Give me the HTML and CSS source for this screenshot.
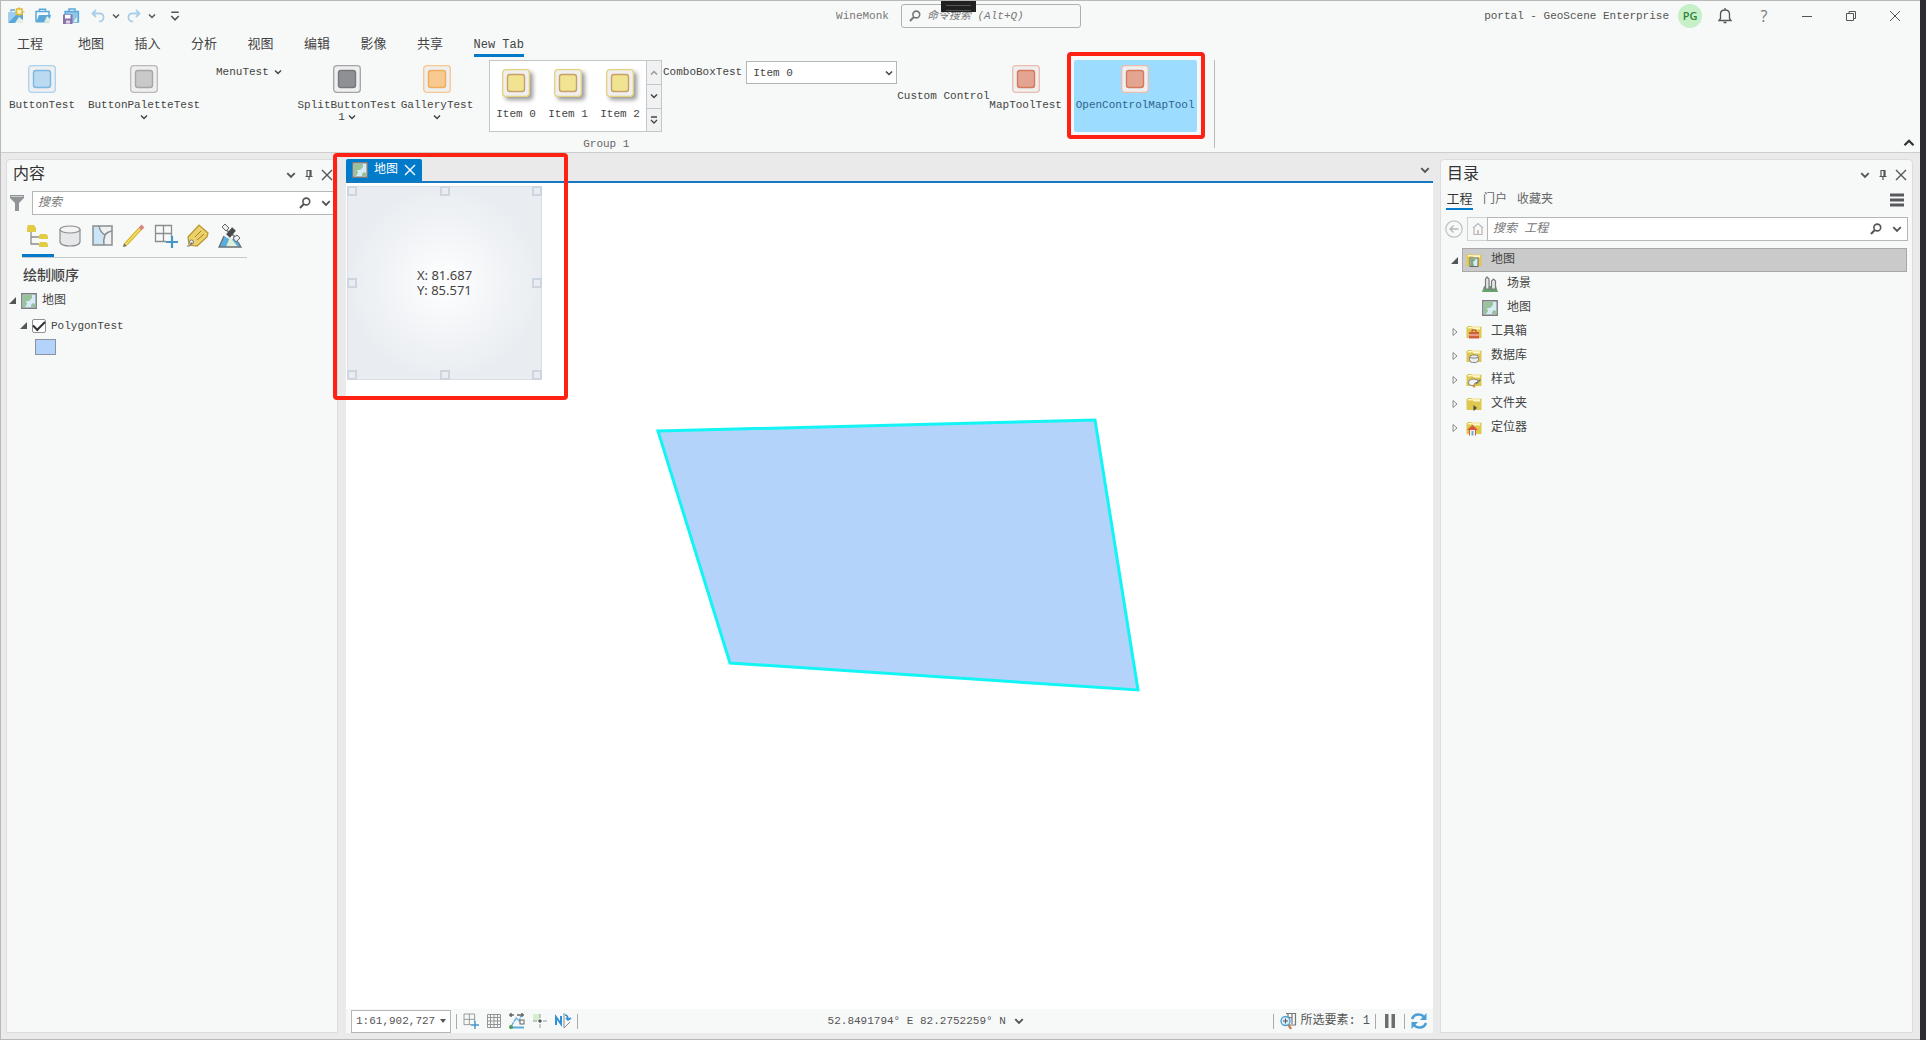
FILE: index.html
```html
<!DOCTYPE html>
<html lang="zh-CN">
<head>
<meta charset="utf-8">
<meta name="viewport" content="width=device-width, initial-scale=1">
<title>WineMonk</title>
<link rel="stylesheet" href="styles.css">
</head>
<body>
<svg class="defs" aria-hidden="true">
  <symbol id="chev" viewBox="0 0 8 8"><path d="M1 2.5 4 5.5 7 2.5" fill="none" stroke="currentColor" stroke-width="1.5"/></symbol>
  <symbol id="chev-up" viewBox="0 0 8 8"><path d="M1 5.5 4 2.5 7 5.5" fill="none" stroke="currentColor" stroke-width="1.5"/></symbol>
  <symbol id="chev-bar" viewBox="0 0 8 8"><path d="M1 1H7M1 4 4 7 7 4" fill="none" stroke="currentColor" stroke-width="1.3"/></symbol>
  <symbol id="close" viewBox="0 0 12 12"><path d="M1 1 11 11M11 1 1 11" fill="none" stroke="currentColor" stroke-width="1.4"/></symbol>
  <symbol id="pin" viewBox="0 0 12 12"><path d="M3.5 1.5H8.5M4 1.5V7M8 1.5V7M7 1.5V7M2.5 7.5H9.5M6 7.5V11" fill="none" stroke="currentColor" stroke-width="1.2"/></symbol>
  <symbol id="search" viewBox="0 0 12 12"><circle cx="7.3" cy="4.5" r="3.4" fill="none" stroke="currentColor" stroke-width="1.6"/><path d="M4.8 7 1 11" stroke="currentColor" stroke-width="2"/></symbol>
  <symbol id="box" viewBox="0 0 28 28"><rect x=".7" y=".7" width="26.6" height="26.6" rx="3" fill="#efeff0" stroke="var(--rim)" stroke-width="1.3"/><rect x="5.5" y="5.5" width="17" height="17" rx="2.5" fill="var(--fill)" stroke="var(--edge)" stroke-width="1.4"/></symbol>
  <symbol id="map" viewBox="0 0 16 16"><path d="M.8.8H15.2V15.2H.8Z" fill="#d6ebf8" stroke="#7b7b7b" stroke-width="1.4"/><path d="M2 2H11V5L8 8 5 8 6 11 4 14H2ZM10 14V12L12 10 14 11V14Z" fill="#97c29a"/></symbol>
  <symbol id="folder" viewBox="0 0 16 16"><path d="M.5 3.5 2 2H5L6.5 2.8H15.5V14H.5Z" fill="#dfc84e"/><path d="M2 4.5 6.5 4.3 8 5.5H14V3.3H6.3L5 3H2Z" fill="#fff6c9"/></symbol>
  <symbol id="grid-plus" viewBox="0 0 24 24"><path d="M1.5 1.5H17.5V17.5H1.5ZM9.5 1.5V17.5M1.5 9.5H17.5" fill="none" stroke="#8a8d8f" stroke-width="1.3"/><path d="M12 13H24V24H12Z" fill="#f7f8f8"/><path d="M18 12V24M12 18H24" stroke="#4596cb" stroke-width="2.2"/></symbol>
</svg>

<div class="window">
  <header class="titlebar">
    <div class="quick">
      <button class="ib q1" aria-label="新建工程"><svg width="18" height="18" viewBox="0 0 18 18"><path d="M1.500 5H16V16H1.500Z" fill="#5aa7da"/><path d="M2 5V15L9 8V5Z" fill="#9dcdf0"/><path d="M8 16 12 10 16 13V16Z" fill="#e3f0e4"/><path d="M4 4.500V3H8" fill="none" stroke="#5aa7da" stroke-width="1.300"/><rect x="9.500" y="2" width="5.500" height="5.500" fill="#fff3b5" stroke="#dfb93d" stroke-width="1.500"/><path d="M12.200 0V2M12.200 7.500V9.500M8 4.700H9M16 4.700H17.500" stroke="#dfb93d"/></svg></button>
      <button class="ib q2" aria-label="打开工程"><svg width="18" height="18" viewBox="0 0 18 18"><path d="M2 15V4.500H15V8M5.500 4V2.200H11.500V4" fill="none" stroke="#5aa7da" stroke-width="1.500"/><path d="M2 15.500 5 8H17L15 15.500Z" fill="#5aa7da"/><path d="M10 15.500 13 9 16 12V15.500Z" fill="#dfeee0"/></svg></button>
      <button class="ib q3" aria-label="保存工程"><svg width="18" height="18" viewBox="0 0 18 18"><path d="M3 12V4.500H16.500V15H10" fill="#8ec4e8" stroke="#5aa7da" stroke-width="1.300"/><path d="M7 4V2H13V4" fill="none" stroke="#5aa7da" stroke-width="1.500"/><path d="M1 7.500H10.500V17H1Z" fill="#8a72ab"/><path d="M3 8H8.500V11.500H3Z" fill="#fff"/><path d="M4 13.500H8V16.500H4Z" fill="#ded6e8"/><path d="M11 15 15 10V15Z" fill="#dfeee0"/></svg></button>
      <button class="ib q4 faded" aria-label="撤消"><svg width="14" height="14" viewBox="0 0 14 14"><path d="M5 1 1.500 4.500 5 8M1.500 4.500H9Q13 5 12.500 9 12 12.500 8 12.500" fill="none" stroke="currentColor" stroke-width="1.800"/></svg></button>
      <button class="ib q5" aria-label="撤消列表"><svg width="8" height="8"><use href="#chev"/></svg></button>
      <button class="ib q6 faded" aria-label="恢复"><svg width="14" height="14" viewBox="0 0 14 14"><path d="M9 1 12.500 4.500 9 8M12.500 4.500H5Q1 5 1.500 9 2 12.500 6 12.500" fill="none" stroke="currentColor" stroke-width="1.800"/></svg></button>
      <button class="ib q5" aria-label="恢复列表"><svg width="8" height="8"><use href="#chev"/></svg></button>
      <button class="ib q7" aria-label="自定义快速访问工具栏"><svg width="10" height="10"><use href="#chev-bar"/></svg></button>
    </div>
    <div class="command">
      <span class="app-name">WineMonk</span>
      <label class="command-box"><svg width="12" height="12"><use href="#search"/></svg><input type="text" aria-label="命令搜索" placeholder="命令搜索 (Alt+Q)"></label>
    </div>
    <div class="account">
      <span>portal - GeoScene Enterprise</span>
      <span class="avatar">PG</span>
      <button class="ib a1" aria-label="通知"><svg width="16" height="18" viewBox="0 0 16 18"><path d="M2 13.500H14L12.500 11.500V7Q12.500 3 8 3 3.500 3 3.500 7V11.500L2 13.500ZM8 3V1M6.500 15.500H9.500" fill="none" stroke="currentColor" stroke-width="1.300"/></svg></button>
      <button class="ib a2 help" aria-label="帮助">?</button>
      <button class="ib a3" aria-label="最小化"><svg width="12" height="12" viewBox="0 0 12 12"><path d="M1 6.500H11" stroke="currentColor"/></svg></button>
      <button class="ib a4" aria-label="还原"><svg width="12" height="12" viewBox="0 0 12 12"><path d="M1.500 3.500H8.500V10.500H1.500ZM4 3V1.500H10.500V8.500H9" fill="none" stroke="currentColor"/></svg></button>
      <button class="ib a5" aria-label="关闭"><svg width="12" height="12" viewBox="0 0 12 12"><path d="M1 1 11 11M11 1 1 11" stroke="currentColor"/></svg></button>
    </div>
    <div class="grip"></div>
  </header>

  <nav class="tabs">
    <button>工程</button>
    <div class="tab-set">
      <button>地图</button><button>插入</button><button>分析</button><button>视图</button><button>编辑</button><button>影像</button><button>共享</button><button class="on">New Tab</button>
    </div>
  </nav>

  <section class="ribbon">
    <div class="group">
      <div class="tools">
        <button class="tool t-button"><svg class="blue" width="28" height="28"><use href="#box"/></svg><span>ButtonTest</span></button>
        <button class="tool t-palette"><svg class="grey" width="28" height="28"><use href="#box"/></svg><span>ButtonPaletteTest</span><svg width="8" height="8"><use href="#chev"/></svg></button>
        <button class="menu">MenuTest<svg width="8" height="8"><use href="#chev"/></svg></button>
        <button class="tool t-split"><svg class="dark" width="28" height="28"><use href="#box"/></svg><span>SplitButtonTest</span><span>1<svg width="8" height="8"><use href="#chev"/></svg></span></button>
        <button class="tool t-gallery"><svg class="orange" width="28" height="28"><use href="#box"/></svg><span>GalleryTest</span><svg width="8" height="8"><use href="#chev"/></svg></button>
        <div class="gallery">
          <button class="item"><svg class="yellow" width="28" height="28"><use href="#box"/></svg>Item 0</button>
          <button class="item"><svg class="yellow" width="28" height="28"><use href="#box"/></svg>Item 1</button>
          <button class="item"><svg class="yellow" width="28" height="28"><use href="#box"/></svg>Item 2</button>
          <div class="spin">
            <button aria-label="向上"><svg class="dim" width="8" height="8"><use href="#chev-up"/></svg></button>
            <button aria-label="向下"><svg width="8" height="8"><use href="#chev"/></svg></button>
            <button aria-label="更多"><svg width="8" height="8"><use href="#chev-bar"/></svg></button>
          </div>
        </div>
        <label class="combo-label" for="combo">ComboBoxTest</label>
        <span class="pick combo"><select id="combo"><option>Item 0</option></select><svg width="8" height="8"><use href="#chev"/></svg></span>
        <span class="custom">Custom Control</span>
        <button class="tool t-map"><svg class="red" width="28" height="28"><use href="#box"/></svg><span>MapToolTest</span></button>
        <button class="tool t-open"><svg class="red" width="28" height="28"><use href="#box"/></svg><span>OpenControlMapTool</span><i class="mark"></i></button>
      </div>
      <div class="group-name">Group 1</div>
    </div>
    <button class="ib fold" aria-label="折叠功能区"><svg width="12" height="12"><use href="#chev-up"/></svg></button>
  </section>

  <main class="dock">
    <aside class="panel contents">
      <div class="head"><h2>内容</h2><button class="ib" aria-label="选项"><svg width="10" height="10"><use href="#chev"/></svg></button><button class="ib" aria-label="固定"><svg width="12" height="12"><use href="#pin"/></svg></button><button class="ib" aria-label="关闭"><svg width="12" height="12"><use href="#close"/></svg></button></div>
      <div class="find-row">
        <svg width="14" height="18" viewBox="0 0 14 18"><path d="M0 1H14V4L9 9V17H5V9L0 4Z" fill="#929597"/><path d="M1 2.500H13" stroke="#c9cbcc"/></svg>
        <div class="find"><input type="text" aria-label="搜索" placeholder="搜索"><svg width="12" height="12"><use href="#search"/></svg><svg width="10" height="10"><use href="#chev"/></svg></div>
      </div>
      <div class="views">
        <button class="on" aria-label="按绘制顺序列出"><svg width="24" height="24" viewBox="0 0 24 24"><path d="M5 8V20H13M5 13H13" fill="none" stroke="#8a8d8f" stroke-width="1.300"/><path d="M2 1H8L10 4V8H1V4ZM14 10H20L22 12V15H13V12ZM14 18H20L22 20V23H13V20Z" fill="#e3cb43"/></svg></button>
        <button aria-label="按数据源列出"><svg width="24" height="24" viewBox="0 0 24 24"><path d="M2 5V18Q3 22 12 22T22 18V5" fill="#e6e7e8" stroke="#8a8d8f" stroke-width="1.200"/><ellipse cx="12" cy="5.500" rx="10" ry="3.500" fill="#f4f4f4" stroke="#8a8d8f" stroke-width="1.200"/></svg></button>
        <button aria-label="按选择列出"><svg width="24" height="24" viewBox="0 0 24 24"><path d="M3 2H22V21H3Z" fill="#eef0f1"/><path d="M3 2H9Q10 8 15 11 13 16 14 21H3Z" fill="#cbe5f7"/><path d="M3 2H22V21H3ZM9 2Q10 8 15 11 13 16 14 21M15 11Q17 8 22 7" fill="none" stroke="#8a8d8f" stroke-width="1.500"/></svg></button>
        <button aria-label="按编辑列出"><svg width="24" height="24" viewBox="0 0 24 24"><path d="M4 20 18 5" stroke="#cfae2a" stroke-width="4"/><path d="M4 20 18 5" stroke="#f0da58" stroke-width="2"/><path d="M18 5 21 2" stroke="#d98782" stroke-width="4"/><path d="M1 23 2 19 5 22Z" fill="#7b6b46"/></svg></button>
        <button aria-label="按捕捉列出"><svg width="24" height="24"><use href="#grid-plus"/></svg></button>
        <button aria-label="按标注列出"><svg width="24" height="24" viewBox="0 0 24 24"><path d="M2 13 13 1 22 9 21 13 11 22 3 21Z" fill="#ecd06b" stroke="#b8962f" stroke-width="1.200"/><path d="M9 13 15 7M11 16 18 10" stroke="#a08121"/><circle cx="5.500" cy="18" r="2" fill="#fff" stroke="#777"/><path d="M1 22Q5 23 6 18" fill="none" stroke="#777"/></svg></button>
        <button aria-label="按影像列出"><svg width="24" height="24" viewBox="0 0 24 24"><path d="M1 23 6 12 13 16 18 13 23 23Z" fill="#5badde"/><path d="M8 23 12 13 20 23Z" fill="#e0f0d8"/><path d="M6 12 1 23H23L20 18" fill="none" stroke="#687077" stroke-width="1.300"/><path d="M7 5 20 15" stroke="#8b8d8f" stroke-width="2"/><path d="M10 12 16 5" stroke="#48494a" stroke-width="5"/><path d="M4 3 7 0 11 4 8 7ZM15 14 19 11 22 14 18 18Z" fill="#eceded" stroke="#666"/></svg></button>
      </div>
      <h3>绘制顺序</h3>
      <ul class="layers">
        <li><svg width="7" height="7" viewBox="0 0 7 7"><path d="M7 0V7H0Z" fill="#555"/></svg><svg width="16" height="16"><use href="#map"/></svg><span>地图</span></li>
        <li class="sub"><svg width="7" height="7" viewBox="0 0 7 7"><path d="M7 0V7H0Z" fill="#555"/></svg><input id="layer" type="checkbox" checked><label for="layer">PolygonTest</label></li>
      </ul>
      <div class="swatch"></div>
    </aside>

    <section class="view">
      <i class="mark"></i>
      <div class="view-tabs">
        <div class="view-tab"><svg width="16" height="16"><use href="#map"/></svg><span>地图</span><button class="ib" aria-label="关闭视图"><svg width="12" height="12"><use href="#close"/></svg></button></div>
        <button class="ib" aria-label="视图列表"><svg width="10" height="10"><use href="#chev"/></svg></button>
      </div>
      <div class="canvas">
        <svg class="shape"><polygon points="312,248 749,237 792,507 384,480" fill="#b3d3fb" stroke="#13f4f4" stroke-width="3"/></svg>
        <div class="overlay">
          <i></i><i></i><i></i>
          <i></i><p>X: 81.687<br>Y: 85.571</p><i></i>
          <i></i><i></i><i></i>
        </div>
      </div>
      <footer class="status">
        <div class="status-part">
          <span class="pick scale"><select aria-label="比例"><option>1:61,902,727</option></select><svg width="6" height="6" viewBox="0 0 6 6"><path d="M0 1H6L3 5Z" fill="#555"/></svg></span>
          <span class="rule"></span>
          <button class="ib" aria-label="捕捉"><svg width="16" height="16"><use href="#grid-plus"/></svg></button>
          <button class="ib" aria-label="格网"><svg width="16" height="16" viewBox="0 0 16 16"><path d="M1.500 1.500H14.500V14.500H1.500ZM4.500 1V15M8 1V15M11.500 1V15M1 4.500H15M1 8H15M1 11.500H15" fill="none" stroke="#929597"/></svg></button>
          <button class="ib" aria-label="约束"><svg width="18" height="18" viewBox="0 0 18 18"><path d="M1 3H6M3 1V5M9 3H16M14 1V5" stroke="#666" stroke-width="1.500"/><path d="M4 13 8 6 11 9 13 4" fill="none" stroke="#5badde" stroke-width="1.500" stroke-dasharray="3 1"/><path d="M2 15.500H16" stroke="#5badde" stroke-width="2"/><rect x="12" y="8" width="4" height="4" fill="none" stroke="#666"/><circle cx="3" cy="15" r="2" fill="#519b56"/></svg></button>
          <button class="ib" aria-label="推断"><svg width="16" height="16" viewBox="0 0 16 16"><path d="M1 1H8V8H1Z" fill="#d5edd0"/><path d="M8 1V15M1 8H15" stroke="#999" stroke-dasharray="4 1"/><circle cx="8" cy="8" r="1.500" fill="#555"/></svg></button>
          <button class="ib" aria-label="校正"><svg width="18" height="18" viewBox="0 0 18 18"><path d="M2 13V5L7 12V4" fill="none" stroke="#2f91d2" stroke-width="2"/><path d="M10 1V16L16 10" fill="none" stroke="#888"/><path d="M11 3Q14 3 14 8M12 6 14 8 17 6" fill="none" stroke="#2f91d2" stroke-width="1.700"/></svg></button>
          <span class="rule"></span>
        </div>
        <button class="coords">52.8491794° E 82.2752259° N<svg width="10" height="10"><use href="#chev"/></svg></button>
        <div class="status-part end">
          <span class="rule"></span>
          <button class="picked"><svg width="18" height="18" viewBox="0 0 18 18"><path d="M7 1.500H16.500V13H10M9 1.500V5L13 6V2M13 6V12" fill="none" stroke="#777" stroke-width="1.200"/><circle cx="6.500" cy="9" r="4.500" fill="#d8edfa" stroke="#4d9ed0" stroke-width="1.300"/><path d="M6.500 6.500V11.500M4 9H9" stroke="#555"/><path d="M9.500 13 12 17" stroke="#c97b3c" stroke-width="2.300"/></svg>所选要素: 1</button>
          <span class="rule"></span>
          <button class="ib" aria-label="暂停"><svg width="14" height="16" viewBox="0 0 14 16"><path d="M2 1H5.500V15H2ZM8.500 1H12V15H8.500Z" fill="#6d6d6d"/></svg></button>
          <span class="rule"></span>
          <button class="ib" aria-label="刷新"><svg width="18" height="18" viewBox="0 0 18 18"><path d="M2 7Q4 2 9 2.500 12 2.500 14 5M16 11Q14 16 9 15.500 6 15.500 4 13" fill="none" stroke="#4b9fd5" stroke-width="2.600"/><path d="M16.500 1V8H10ZM1.500 17V10H8Z" fill="#4b9fd5"/></svg></button>
        </div>
      </footer>
    </section>

    <aside class="panel catalog">
      <div class="head"><h2>目录</h2><button class="ib" aria-label="选项"><svg width="10" height="10"><use href="#chev"/></svg></button><button class="ib" aria-label="固定"><svg width="12" height="12"><use href="#pin"/></svg></button><button class="ib" aria-label="关闭"><svg width="12" height="12"><use href="#close"/></svg></button></div>
      <div class="cat-tabs"><button class="on">工程</button><button>门户</button><button>收藏夹</button><button class="ib burger" aria-label="菜单"><svg width="16" height="14" viewBox="0 0 16 14"><path d="M1 2H15M1 7H15M1 12H15" stroke="#58595b" stroke-width="3"/></svg></button></div>
      <div class="find-row">
        <button class="ib" aria-label="后退"><svg width="18" height="18" viewBox="0 0 18 18"><circle cx="9" cy="9" r="8.200" fill="none" stroke="#bfc1c2" stroke-width="1.200"/><path d="M13.500 9H5M8.500 5.500 5 9 8.500 12.500" fill="none" stroke="#b5b7b8" stroke-width="1.300"/></svg></button>
        <button class="ib home" aria-label="主页"><svg width="12" height="14" viewBox="0 0 12 14"><path d="M1 6 6 1.500 11 6M2 5.500V12.500H10V5.500" fill="none" stroke="#b5b7b8" stroke-width="1.200"/><path d="M5 8H7V12H5Z" fill="#d8bfae"/></svg></button>
        <div class="find"><input type="text" aria-label="搜索 工程" placeholder="搜索 工程"><svg width="12" height="12"><use href="#search"/></svg><svg width="10" height="10"><use href="#chev"/></svg></div>
      </div>
      <ul class="tree">
        <li class="sel"><svg width="8" height="7" viewBox="0 0 8 7"><path d="M7 0V7H0Z" fill="#555"/></svg><span class="node"><svg width="16" height="16" viewBox="0 0 16 16"><use href="#folder"/><rect x="4" y="6" width="8" height="8.500" fill="#d6ebf8" stroke="#686868"/><path d="M5 7H10L7 10 8 14H5Z" fill="#78ad7c"/></svg>地图</span></li>
        <li class="leaf"><svg width="16" height="16" viewBox="0 0 16 16"><path d="M2 10H14L16 16H0Z" fill="#67a26b"/><path d="M3.500 13V3L5 1 7 3V13ZM9.500 13V5L11.500 3 13.500 5V13Z" fill="#e5e6e8" stroke="#77797b" stroke-width="1.200"/></svg>场景</li>
        <li class="leaf"><svg width="16" height="16"><use href="#map"/></svg>地图</li>
        <li><svg width="8" height="10" viewBox="0 0 8 10"><path d="M2 1.500 6 5 2 8.500Z" fill="none" stroke="#8a8a8a"/></svg><span class="node"><svg width="16" height="16" viewBox="0 0 16 16"><use href="#folder"/><path d="M3 8H13V14.500H3Z" fill="#d05f42"/><path d="M6 8V6H10V8" fill="none" stroke="#a9452c"/><path d="M3 11H13" stroke="#fbd9cc"/></svg>工具箱</span></li>
        <li><svg width="8" height="10" viewBox="0 0 8 10"><path d="M2 1.500 6 5 2 8.500Z" fill="none" stroke="#8a8a8a"/></svg><span class="node"><svg width="16" height="16" viewBox="0 0 16 16"><use href="#folder"/><rect x="3.500" y="7" width="9" height="7.500" rx="3" fill="#ececec" stroke="#858585"/><path d="M4 9.500Q8 11 12 9.500" fill="none" stroke="#858585"/></svg>数据库</span></li>
        <li><svg width="8" height="10" viewBox="0 0 8 10"><path d="M2 1.500 6 5 2 8.500Z" fill="none" stroke="#8a8a8a"/></svg><span class="node"><svg width="16" height="16" viewBox="0 0 16 16"><use href="#folder"/><path d="M2.500 11Q2.500 7 8 7 12 7 12.500 10L9 11 8 13.500Q3 14 2.500 11Z" fill="#f3f3f3" stroke="#858585"/><path d="M10 12 14.500 7.500" stroke="#777" stroke-width="1.500"/><circle cx="8" cy="14" r="1.500" fill="#d9923f"/></svg>样式</span></li>
        <li><svg width="8" height="10" viewBox="0 0 8 10"><path d="M2 1.500 6 5 2 8.500Z" fill="none" stroke="#8a8a8a"/></svg><span class="node"><svg width="16" height="16" viewBox="0 0 16 16"><use href="#folder"/><path d="M7.500 9V15L11 12Z" fill="#4b4b4b"/></svg>文件夹</span></li>
        <li><svg width="8" height="10" viewBox="0 0 8 10"><path d="M2 1.500 6 5 2 8.500Z" fill="none" stroke="#8a8a8a"/></svg><span class="node"><svg width="16" height="16" viewBox="0 0 16 16"><use href="#folder"/><path d="M3 9H10V15.500H3Z" fill="#f4f4f4"/><path d="M1 10 6.500 5 12 10Z" fill="#d7573c"/><path d="M3.500 10V15.500M9.500 10V15.500" stroke="#d7573c"/><path d="M5.500 11H7.500V15.500H5.500Z" fill="#66aedb"/></svg>定位器</span></li>
      </ul>
    </aside>
  </main>
</div>
</body>
</html>
```
FILE: styles.css
```css
* { box-sizing: border-box; }

body {
  margin: 0;
  min-height: 100vh;
  display: flex;
  padding-right: 6px;
  background: #2b2d31;
  color: #444;
  font: 11px/16px "Liberation Mono", "Noto Sans CJK SC", monospace;
}

button, input, select {
  margin: 0;
  padding: 0;
  border: 0;
  background: none;
  color: inherit;
  font: inherit;
  border-radius: 0;
}

svg { display: block; flex: none; }
h2, h3, p, ul { margin: 0; padding: 0; font-weight: 400; }
ul { list-style: none; }
.defs { position: absolute; width: 0; height: 0; }

.ib {
  display: flex;
  align-items: center;
  justify-content: center;
  flex: none;
}

.window {
  flex: 1;
  min-width: 0;
  display: flex;
  flex-direction: column;
  border: 1px solid #b9b9b9;
  border-right: 0;
  background: #eaeaea;
}

/* Title bar */
.titlebar {
  position: relative;
  display: grid;
  grid-template-columns: 1fr auto 1fr;
  align-items: center;
  height: 30px;
  background: #f7f9f8;
  color: #555;
}
.quick { display: flex; align-items: center; padding-left: 5px; }
.q1, .q2, .q3 { width: 28px; height: 24px; justify-content: flex-start; }
.q4, .q6 { width: 20px; }
.q5 { width: 16px; }
.q7 { width: 30px; }
.q1 { padding-left: 1px; }
.quick .q3 { width: 26px; }
.quick .faded { color: #a9cfea; }

.command { display: flex; align-items: center; gap: 12px; padding-right: 4px; color: #777; }
.command-box {
  display: flex;
  align-items: center;
  gap: 6px;
  width: 180px;
  height: 24px;
  padding-left: 7px;
  border: 1px solid #aeb0b1;
  border-radius: 3px;
}
.command-box input { width: 150px; outline: 0; font-style: italic; }
input::placeholder { color: #777; opacity: 1; }
.grip {
  position: absolute;
  top: 0;
  left: 49%;
  width: 35px;
  height: 11px;
  padding: 4px 5px;
  background: #202020;
}
.grip::before { content: ""; display: block; height: 4px; border: solid #555; border-width: 1px 0; }

.account { display: flex; align-items: center; justify-content: flex-end; padding-right: 3px; }
.avatar {
  display: flex;
  align-items: center;
  justify-content: center;
  width: 24px;
  height: 24px;
  margin: 0 5px 0 9px;
  border-radius: 50%;
  background: #c6f0c8;
  color: #32803a;
  font: 600 11px/16px "Open Sans", sans-serif;
}
.a1 { width: 36px; }
.a2 { width: 42px; }
.a3, .a4, .a5 { width: 44px; }
.help { font: 16px/20px "Open Sans", sans-serif; color: #777; }

/* Ribbon tabs */
.tabs {
  display: flex;
  gap: 35px;
  height: 26px;
  padding-left: 16px;
  background: #f7f9f8;
  font-size: 13px;
  line-height: 24px;
}
.tab-set { display: flex; justify-content: space-between; width: 446px; }
.tabs button { height: 26px; padding-top: 2px; white-space: nowrap; border-bottom: 3px solid transparent; }
.tabs .on { border-color: #007ac9; font-size: 12px; }

/* Ribbon */
.ribbon {
  display: flex;
  justify-content: space-between;
  align-items: flex-end;
  height: 96px;
  padding: 3px 5px 3px 0;
  border-bottom: 1px solid #cdcdcd;
  background: #f7f9f8;
}
.group { align-self: flex-start; height: 88px; border-right: 1px solid #bbb; padding-right: 17px; }
.tools { display: flex; align-items: flex-start; height: 72px; }
.group-name { text-align: center; padding-left: 15px; line-height: 24px; color: #666; }
.fold { height: 12px; width: 12px; color: #333; }

.tool {
  position: relative;
  display: flex;
  flex-direction: column;
  align-items: center;
  height: 72px;
  padding-top: 5px;
  line-height: 12px;
  white-space: nowrap;
}
.tool span { display: flex; align-items: center; gap: 3px; }
.tool svg + span { margin-top: 6px; }
.tool span + svg { margin-top: 2px; }
.t-button { width: 82px; }
.t-palette { width: 122px; }
.menu { display: flex; align-items: center; gap: 5px; height: 24px; padding-left: 11px; width: 89px; }
.t-split { width: 106px; }
.t-gallery { width: 74px; margin-right: 15px; }
.t-map { width: 72px; }
.t-open { width: 123px; margin-left: 12px; border-radius: 2px; background: #9cdcfe; color: #2d658a; }

.blue { --fill: #b9daf0; --edge: #7bb7df; --rim: #a9d3ef; }
.grey { --fill: #c9c9ca; --edge: #a5a5a7; --rim: #b9b9bb; }
.dark { --fill: #8f9094; --edge: #77787c; --rim: #a3a4a7; }
.orange { --fill: #f8ca90; --edge: #eeac5d; --rim: #f6c78f; }
.yellow { --fill: #f0e391; --edge: #c9a06a; --rim: #e4d27c; filter: drop-shadow(3px 3px 2px #9b9b9b); }
.red { --fill: #e3a592; --edge: #d5795c; --rim: #ecbcae; }

.gallery {
  display: flex;
  width: 173px;
  height: 72px;
  border: 1px solid #c4c6c8;
  background: #fff;
}
.item {
  flex: 1;
  display: flex;
  flex-direction: column;
  align-items: center;
  gap: 9px;
  padding-top: 8px;
  white-space: nowrap;
}
.spin { display: grid; grid-template-rows: repeat(3, 1fr); width: 15px; border-left: 1px solid #c4c6c8; background: #f0f1f2; }
.spin button { display: grid; place-items: center; }
.spin button + button { border-top: 1px solid #c4c6c8; }
.dim { color: #999; }
.combo-label { padding: 4px 4px 0 1px; white-space: nowrap; }
.pick { display: grid; align-items: center; border: 1px solid #b4b6b8; background: #fff; }
.pick select, .pick svg { grid-area: 1 / 1; }
.pick select { width: 100%; height: 100%; padding-left: 6px; appearance: none; }
.pick svg { justify-self: end; margin-right: 3px; pointer-events: none; }
.combo { width: 151px; height: 23px; margin-top: 1px; }
.custom { align-self: center; white-space: nowrap; }

/* Callout frame */
.mark { position: absolute; z-index: 2; border: 4px solid #ff2214; border-radius: 4px; pointer-events: none; }
.t-open .mark { inset: -8px -8px -7px -7px; }
.view > .mark { top: -6px; left: -13px; width: 235px; height: 247px; }

/* Docked panes */
.dock { flex: 1; display: flex; padding: 6px 7px 6px 5px; }
.panel { flex: none; border: 1px solid #dcdcdc; border-radius: 4px 4px 0 0; background: #f7f9f8; }
.contents { width: 332px; margin-right: 8px; }
.catalog { width: 473px; margin-left: 7px; }
.head { display: flex; align-items: center; gap: 2px; height: 30px; padding: 0 3px 0 6px; color: #555; }
.head h2 { flex: 1; font-size: 16px; line-height: 24px; color: #333; }
.head .ib { width: 16px; height: 16px; }
.contents .head { padding-right: 2px; }

.find-row { display: flex; align-items: center; height: 26px; }
.find {
  flex: 1;
  display: flex;
  align-items: center;
  gap: 10px;
  height: 24px;
  padding: 0 5px;
  border: 1px solid #b4b6b8;
  background: #fff;
  color: #555;
}
.find input { flex: 1; min-width: 0; outline: 0; font-size: 12px; font-style: italic; }
.contents .find-row { padding-left: 3px; gap: 8px; }

.views { display: flex; width: 225px; margin: 5px 0 0 15px; border-bottom: 1px solid #c6c8c9; }
.views button { width: 32px; height: 36px; padding: 3px 4px 6px; border-bottom: 3px solid transparent; }
.views .on { border-color: #007ac9; }
h3 { padding: 8px 0 0 16px; font-size: 14px; line-height: 20px; font-weight: 500; }
.layers { padding-top: 2px; }
.layers li { display: flex; align-items: center; height: 25px; padding-left: 2px; gap: 5px; font-size: 12px; }
.layers .sub { padding-left: 13px; font-size: 11px; }
.layers input {
  appearance: none;
  display: grid;
  place-items: center;
  width: 14px;
  height: 14px;
  border: 1px solid #929292;
  border-radius: 2px;
  background: #fff;
}
.layers input:checked::before {
  content: "";
  width: 10px;
  height: 5px;
  border: solid #333;
  border-width: 0 0 2px 2px;
  transform: translateY(-1px) rotate(-45deg);
}
.swatch { width: 21px; height: 16px; margin: 1px 0 0 28px; border: 1px solid #8b93a0; background: #b3d3fb; }

/* Map view */
.view { position: relative; flex: 1; min-width: 0; display: flex; flex-direction: column; }
.view-tabs { display: flex; justify-content: space-between; height: 24px; padding-right: 3px; border-bottom: 2px solid #1579bf; color: #555; }
.view-tab {
  display: flex;
  align-items: center;
  gap: 6px;
  width: 76px;
  padding-left: 6px;
  border-radius: 2px 2px 0 0;
  background: #007ac9;
  color: #fff;
  font-size: 12px;
}
.canvas { position: relative; flex: 1; background: #fff; }
.shape { position: absolute; width: 100%; height: 100%; }
.overlay {
  position: absolute;
  top: 3px;
  left: 1px;
  display: grid;
  grid-template-columns: 10px 1fr 10px;
  grid-template-rows: 10px 1fr 10px;
  place-items: center;
  width: 195px;
  height: 194px;
  background: radial-gradient(closest-side, #fff, #f2f4f7 55%, #e9edf1);
  box-shadow: inset 0 0 0 1px #d8dfe5;
}
.overlay i { width: 10px; height: 10px; border: 2px solid #cdd6de; background: #e9edf2; }
.overlay p { font: 13px/15px "Noto Sans", sans-serif; }

.status { display: flex; justify-content: space-between; align-items: center; height: 24px; padding: 0 5px; background: #f7f9f8; color: #555; }
.status-part { display: flex; align-items: center; gap: 5px; }
.status-part .ib { width: 18px; }
.scale { width: 100px; height: 23px; }
.scale svg { margin-right: 4px; }
.scale select { padding-left: 4px; }
.rule { width: 1px; height: 15px; background: #aaa; }
.coords, .picked { display: flex; align-items: center; gap: 8px; }
.picked { gap: 3px; font-size: 12px; }

/* Catalog */
.cat-tabs { display: flex; gap: 10px; height: 20px; padding: 0 7px 0 5px; font-size: 12px; line-height: 17px; color: #666; }
.cat-tabs .on { width: 27px; border-bottom: 2px solid #007ac9; color: #333; font-size: 13px; }
.cat-tabs .burger { margin-left: auto; }
.catalog .find-row { margin: 6px 4px 0; }
.home { width: 20px; height: 24px; margin-left: 4px; border: 1px solid #d0d2d3; border-right: 0; }
.tree { padding: 6px 5px 0 10px; font-size: 12px; }
.tree li { display: flex; align-items: center; gap: 3px; height: 24px; }
.node { flex: 1; display: flex; align-items: center; gap: 9px; height: 24px; padding-left: 3px; border: 1px solid transparent; }
.sel .node { border-color: #a8a8a8; background: #cacaca; }
.tree .leaf { gap: 9px; padding-left: 31px; }
```
